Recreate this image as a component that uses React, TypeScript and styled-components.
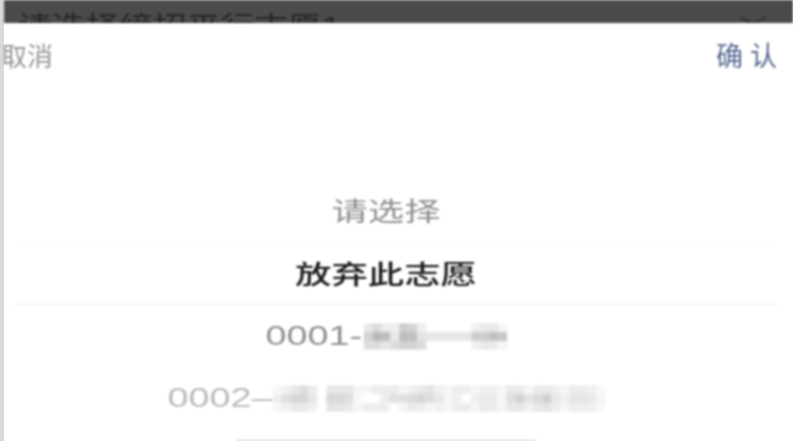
import React from 'react';
import styled, { createGlobalStyle } from 'styled-components';

const GlobalStyle = createGlobalStyle`
  html, body {
    margin: 0;
    padding: 0;
    background: #fff;
  }
`;

const Page = styled.div`
  width: 793px;
  height: 441px;
  display: flex;
  overflow: hidden;
  font-family: "Liberation Sans", "Noto Sans CJK SC", sans-serif;
`;

const Edge = styled.div`
  width: 4px;
  flex: none;
  background: #d9d9d9;
`;

const Main = styled.div`
  flex: 1;
  min-width: 0;
  display: flex;
  flex-direction: column;
  overflow: hidden;
  filter: blur(0.9px);
`;

const DimBar = styled.div`
  height: 23px;
  flex: none;
  overflow: hidden;
  background: #4b4b4b;
  display: flex;
  justify-content: space-between;
  padding: 12px 25px 0 14px;
  box-sizing: border-box;
`;

const DimTitle = styled.div`
  font-size: 27px;
  line-height: 30px;
  color: #262626;
  white-space: nowrap;
  transform: scaleX(1.25);
  transform-origin: left top;
`;

const Chevron = styled.svg`
  width: 30px;
  height: 12px;
  margin-top: 4px;
  flex: none;
`;

const Toolbar = styled.div`
  height: 66px;
  flex: none;
  display: flex;
  align-items: center;
  justify-content: space-between;
  padding: 0 16px 4px 0;
  box-sizing: border-box;
  font-size: 26px;
  overflow: hidden;
`;

const Cancel = styled.span`
  color: #969696;
  margin-left: -3px;
`;

const Confirm = styled.span`
  font-size: 27px;
  color: #56688f;
  letter-spacing: 7px;
  margin-right: -7px;
`;

const Picker = styled.div`
  margin: 92px 16px 0 11px;
  display: flex;
  flex-direction: column;
`;

const Row = styled.div<{ $line?: 'faint' | 'plain'; $shift?: number }>`
  height: 62px;
  box-sizing: border-box;
  padding-right: 20px;
  padding-top: ${({ $shift }) => ($shift && $shift > 0 ? $shift : 0)}px;
  padding-bottom: ${({ $shift }) => ($shift && $shift < 0 ? -$shift : 0)}px;
  display: flex;
  align-items: center;
  justify-content: center;
  border-bottom: 1px solid
    ${({ $line }) => ($line === 'plain' ? '#eeeeee' : $line === 'faint' ? '#f8f8f8' : 'transparent')};
`;

const Stretched = styled.div<{ $tone: string; $weight?: number }>`
  display: flex;
  align-items: center;
  font-size: 26px;
  color: ${({ $tone }) => $tone};
  font-weight: ${({ $weight }) => $weight ?? 400};
  transform: scaleX(1.4);
  white-space: nowrap;
`;

const Code = styled.span<{ $gap: number }>`
  font-size: 27px;
  margin-right: ${({ $gap }) => $gap}px;
`;

const Mosaic = styled.svg`
  display: block;
  flex: none;
`;

const HomeBar = styled.div`
  width: 300px;
  height: 2px;
  flex: none;
  margin: 11px auto 0 232px;
  background: #c4c4c4;
`;

// grey values of the blurred-out school names, one string per pixel row
const firstName = [
  'e8 dc ec ee cc d4 f0 ff ff ff ff ff f0 ea e8 f6',
  'd4 b8 bc e8 bc c0 e4 e6 e6 e6 e6 e6 cc cc c0 c6',
  'de dc e6 dc d2 d2 dc ff ff ff ff ff f2 e8 ec f6',
];

const secondName = [
  'f8 f0 e6 dc ec ff e6 e6 e6 f6 f6 ec ec ec f6 f0 e8 e4 f0 f6 ec ec f6 f0 f0 f6 e8 ea f6 ea ea f0 f6 ec ec f0 f8',
  'ee e0 d8 d6 e6 ff d8 d8 de f8 ff ff ec e0 e0 dc d6 de e8 f6 f0 ff f0 ea ea f6 e0 d2 e4 dc d0 e8 f0 e4 e4 e8 f4',
  'f6 f0 ea ea f0 ff e4 e4 ea f6 ee ee ee ff f6 ea ee f6 f0 f6 ec ec f6 ea ec f6 e8 e6 f0 e8 e4 ee f6 ee ee f0 f8',
];

const MosaicName: React.FC<{ rows: string[]; blur: number }> = ({ rows, blur }) => {
  const cols = rows[0].split(' ').length;
  const id = `mosaic-${cols}`;
  return (
    <Mosaic width={(cols * 9) / 1.4} height={rows.length * 9} viewBox={`0 0 ${cols * 9} ${rows.length * 9}`} preserveAspectRatio="none">
      <filter id={id}>
        <feGaussianBlur stdDeviation={blur} />
      </filter>
      <g filter={`url(#${id})`}>
        {rows.map((row, y) =>
          row.split(' ').map((v, x) => (
            <rect key={`${x}-${y}`} x={x * 9} y={y * 9} width={9.2} height={9.2} fill={`#${v}${v}${v}`} />
          )),
        )}
      </g>
    </Mosaic>
  );
};

const App: React.FC = () => (
  <>
    <GlobalStyle />
    <Page>
      <Edge />
      <Main>
        <DimBar>
          <DimTitle>请选择缔招平行志愿1</DimTitle>
          <Chevron viewBox="0 0 30 12">
            <polyline points="2,1 15,8 28,1" fill="none" stroke="#333333" strokeWidth="2" />
          </Chevron>
        </DimBar>
        <Toolbar>
          <Cancel>取消</Cancel>
          <Confirm>确认</Confirm>
        </Toolbar>
        <Picker>
          <Row $line="faint" $shift={-4}>
            <Stretched $tone="#8f8f8f">请选择</Stretched>
          </Row>
          <Row $line="plain" $shift={-2}>
            <Stretched $tone="#1c1c1c" $weight={500}>放弃此志愿</Stretched>
          </Row>
          <Row $shift={2}>
            <Stretched $tone="#8f8f8f">
              <Code $gap={1}>0001-</Code>
              <MosaicName rows={firstName} blur={0.8} />
            </Stretched>
          </Row>
          <Row $shift={2}>
            <Stretched $tone="#b9b9b9">
              <Code $gap={0}>0002–</Code>
              <MosaicName rows={secondName} blur={0.8} />
            </Stretched>
          </Row>
        </Picker>
        <HomeBar />
      </Main>
    </Page>
  </>
);

export default App;
